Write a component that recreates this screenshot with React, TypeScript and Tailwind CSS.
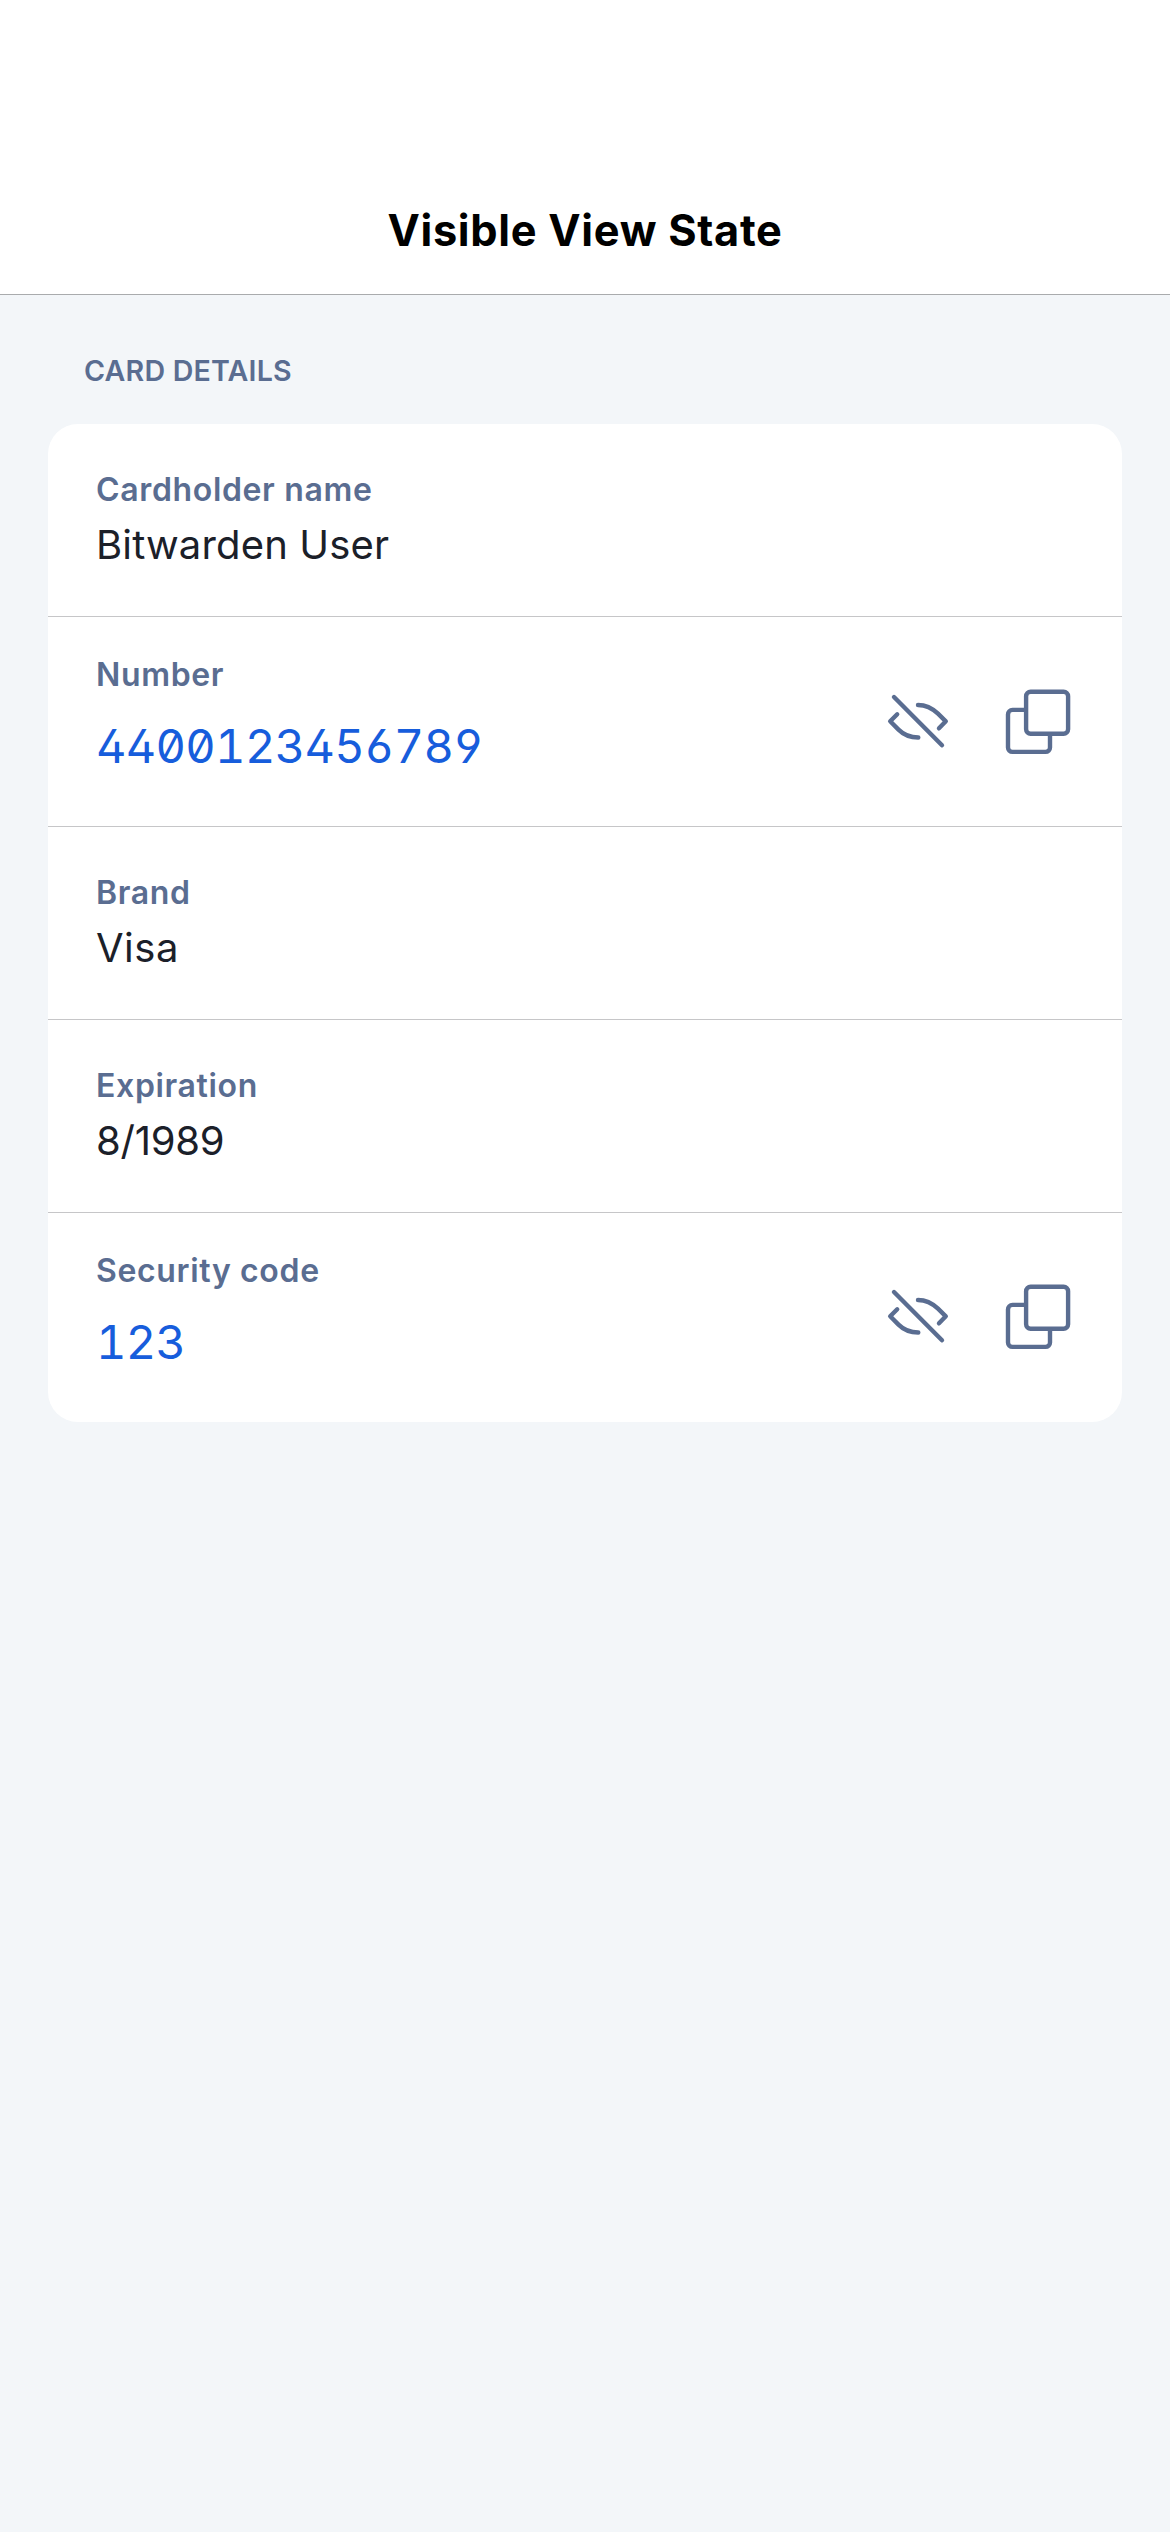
function EyeSlash() {
  return (
    <svg
      className="h-[75px] w-[75px] shrink-0"
      viewBox="0 0 75 75"
      fill="none"
      stroke="currentColor"
      strokeWidth="4.4"
      strokeLinecap="round"
      strokeLinejoin="round"
    >
      <path d="M14 17 L62 65.3" />
      <path d="M17.2 34.3 L10.2 41.3 L18.5 49.6 C24.5 55.6 30.5 57.5 38.3 57.5" />
      <path d="M38 25 C45.5 25 52 28 58 33.7 L65.8 41.3 L59 48.3" />
    </svg>
  );
}

function CopySquares() {
  return (
    <svg
      className="h-[75px] w-[75px] shrink-0"
      viewBox="0 0 75 75"
      fill="none"
      stroke="currentColor"
      strokeWidth="4.4"
      strokeLinejoin="round"
    >
      <rect x="26.1" y="11.8" width="42" height="42" rx="4.5" />
      <path d="M26.1 29.9 H12.5 a4.5 4.5 0 0 0 -4.5 4.5 V67.4 a4.5 4.5 0 0 0 4.5 4.5 H45.5 a4.5 4.5 0 0 0 4.5 -4.5 V53.8" />
    </svg>
  );
}

const label = "text-[32px] leading-[42px] font-semibold tracking-[0.65px] text-[#5a6d91]";

function TextRow({ name, value, tracking }: { name: string; value: string; tracking: string }) {
  return (
    <div className="h-[193px] px-12 pt-[45px]">
      <div className={label}>{name}</div>
      <div className={`mt-2 text-[40px] leading-[52px] text-[#1b2029] ${tracking}`}>{value}</div>
    </div>
  );
}

function SecretRow({ name, value }: { name: string; value: string }) {
  return (
    <div className="group flex h-[210px] justify-between pr-[47px] pl-12 last:h-[209px]">
      <div className="pt-[37px]">
        <div className={label}>{name}</div>
        <div className="mt-5 text-[47px] leading-[60px] tracking-[-0.7px] text-[#175ddc] [font-feature-settings:'tnum','zero','cv02','cv03','cv04']">
          {value}
        </div>
      </div>
      <div className="flex gap-[45px] pt-[63px] text-[#5a6d91] group-last:pt-[62px]">
        <button aria-label={`Hide ${name}`} className="flex h-[75px]">
          <EyeSlash />
        </button>
        <button aria-label={`Copy ${name}`} className="flex h-[75px]">
          <CopySquares />
        </button>
      </div>
    </div>
  );
}

export default function App() {
  return (
    <div className="min-h-[2532px] w-[1170px] bg-[#f3f6f9] font-['Inter',sans-serif]">
      <header className="h-[295px] border-b border-[#a9abad] bg-white pt-[202px] text-center">
        <h1 className="text-[43.3px] leading-[56px] font-bold tracking-[0.72px] text-black">Visible View State</h1>
      </header>
      <main className="px-12 pt-[58px]">
        <h2 className="pl-9 text-[28.6px] leading-9 font-semibold tracking-[0.2px] text-[#5a6d91]">CARD DETAILS</h2>
        <section className="mt-[35px] divide-y divide-[#c6c6c8] overflow-hidden rounded-[30px] bg-white">
          <TextRow name="Cardholder name" value="Bitwarden User" tracking="tracking-[0.15px]" />
          <SecretRow name="Number" value="4400123456789" />
          <TextRow name="Brand" value="Visa" tracking="tracking-[0.5px]" />
          <TextRow name="Expiration" value="8/1989" tracking="tracking-[-0.25px]" />
          <SecretRow name="Security code" value="123" />
        </section>
      </main>
    </div>
  );
}
